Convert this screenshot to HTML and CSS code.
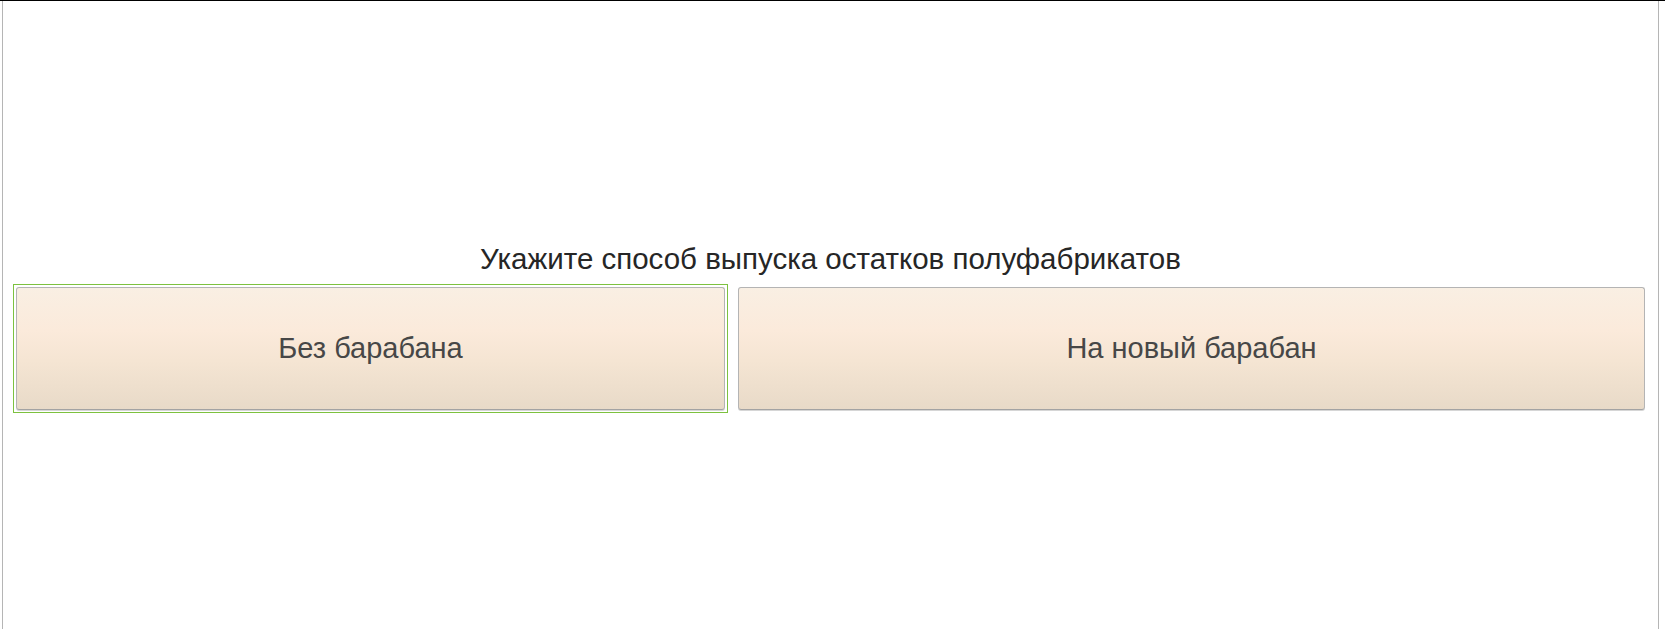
FILE: index.html
```html
<!DOCTYPE html>
<html lang="ru">
<head>
    <meta charset="UTF-8" />
    <title>Выпуск остатков</title>
    <link rel="stylesheet" href="styles.css">
</head>
<body>
    <div class="window">
        <div class="panel">
            <div class="title">Укажите способ выпуска остатков полуфабрикатов</div>
            <div class="choices">
                <div class="slot focused">
                    <button type="button" class="btn">Без барабана</button>
                </div>
                <div class="slot">
                    <button type="button" class="btn">На новый барабан</button>
                </div>
            </div>
        </div>
    </div>
</body>
</html>
```

FILE: styles.css
```css
html, body {
    margin: 0;
    padding: 0;
    background: #fff;
}

.window {
    border-top: 1px solid #000;
    height: 628px;
    font-family: "Liberation Sans", Arial, sans-serif;
}

.panel {
    margin: 0 6px 0 2px;
    height: 100%;
    border-left: 1px solid #b5b5b5;
    border-right: 1px solid #b5b5b5;
    padding: 241px 10px 0 10px;
    box-sizing: border-box;
}

.title {
    text-align: center;
    font-size: 29.5px;
    line-height: 34px;
    color: #262626;
    margin-bottom: 8px;
}

.choices {
    display: grid;
    grid-template-columns: 715fr 913fr;
    gap: 7px;
}

.slot {
    padding: 2px;
    border: 1px solid transparent;
}

.slot.focused {
    border-color: #7dc13f;
}

.btn {
    display: block;
    width: 100%;
    height: 123px;
    border: 1px solid #b4b4b4;
    border-bottom-color: #a3a3a3;
    border-radius: 3px;
    box-shadow: 0 1px 0 #d6d6d6;
    background: linear-gradient(to bottom, #f9efe3 0%, #fbeadb 35%, #f5e5d3 60%, #e8dac8 100%);
    font-family: "Liberation Sans", Arial, sans-serif;
    font-size: 29px;
    color: #474747;
    cursor: pointer;
    padding: 0;
}
```
